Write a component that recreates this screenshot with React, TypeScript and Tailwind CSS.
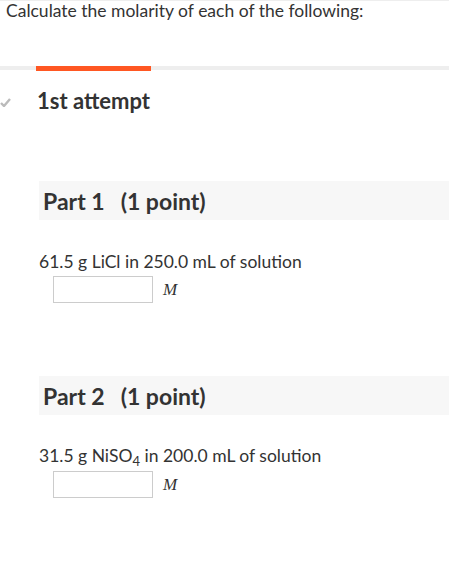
import React from "react";

const font = { fontFamily: "Lato, 'Open Sans', sans-serif" };

function AnswerRow({ mt }: { mt: string }) {
  return (
    <div className={`flex items-center pl-[53px] ${mt}`}>
      <div className="w-[100px] h-[27px] border border-[#ccc] bg-white" />
      <span
        className="ml-[10px] text-[17px] italic text-[#333]"
        style={{ fontFamily: "'Liberation Serif', 'Times New Roman', serif" }}
      >
        M
      </span>
    </div>
  );
}

function PartHeader({ n }: { n: number }) {
  return (
    <div className="ml-[39px] h-[39px] bg-[#f7f7f7] flex items-center pl-[4px] text-[23px] font-bold text-[#333] leading-[28px]">
      <span>Part {n}</span>
      <span className="ml-[16px]">(1 point)</span>
    </div>
  );
}

export default function App() {
  return (
    <div className="w-[449px] h-[562px] bg-white overflow-hidden text-[#333]" style={font}>
      <div className="border-t border-[#eee] pl-[6px] text-[17.5px] leading-[20px]">
        Calculate the molarity of each of the following:
      </div>
      <div className="mt-[45px] h-[4px] bg-[#eee] relative">
        <div className="absolute left-[36px] top-0 w-[115px] h-[5px] bg-[#ff5722]" />
      </div>
      <div className="flex items-center mt-[16px] h-[28px]">
        <svg width="11" height="9" viewBox="0 0 11 9" className="mt-[5px]">
          <path d="M1 5 L4 8 L10 1" stroke="#bbb" strokeWidth="2.4" fill="none" />
        </svg>
        <span className="ml-[26px] text-[22px] font-bold text-[#333]">1st attempt</span>
      </div>
      <div className="mt-[67px]">
        <PartHeader n={1} />
      </div>
      <div className="ml-[39px] mt-[32px] text-[17.5px] leading-[20px]">
        61.5 g LiCl in 250.0 mL of solution
      </div>
      <AnswerRow mt="mt-[4px]" />
      <div className="mt-[73px]">
        <PartHeader n={2} />
      </div>
      <div className="ml-[39px] mt-[31px] text-[17.5px] leading-[20px]">
        31.5 g NiSO<sub className="text-[13px] align-baseline relative top-[4px]">4</sub> in 200.0 mL of solution
      </div>
      <AnswerRow mt="mt-[5px]" />
    </div>
  );
}
